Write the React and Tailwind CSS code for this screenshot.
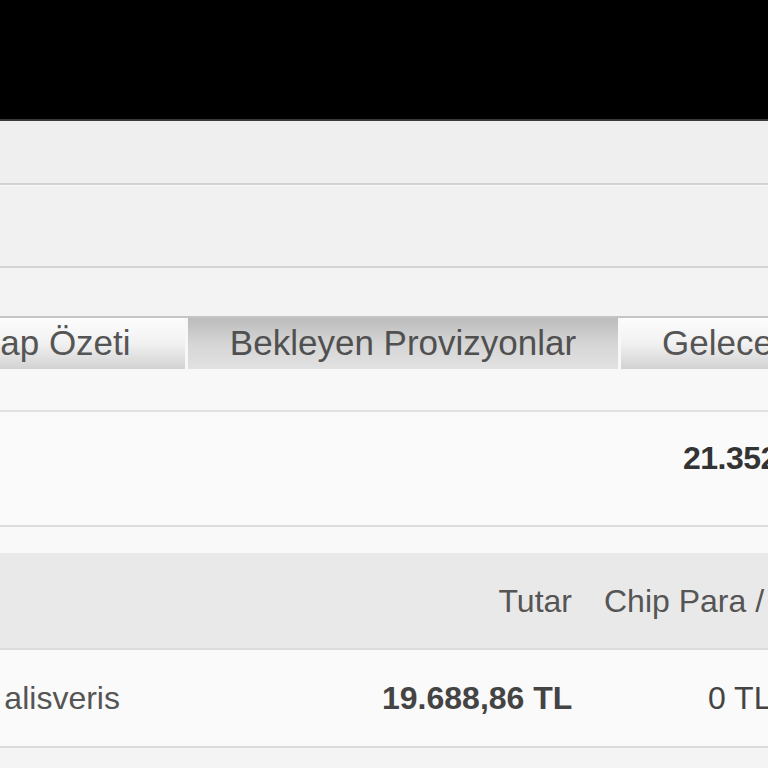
import React from "react";

export default function App() {
  const font = { fontFamily: '"Liberation Sans", Arial, sans-serif' };
  return (
    <div
      className="w-[768px] h-[768px] overflow-hidden bg-[#f4f4f4] flex flex-col"
      style={font}
    >
      {/* top black bar */}
      <div className="h-[121px] shrink-0 bg-black border-b-2 border-[#3a3a3a]" />

      {/* grey header bands */}
      <div className="h-[64px] shrink-0 bg-[#efefef] border-b-2 border-[#d2d2d2]" />
      <div className="h-[83px] shrink-0 bg-[#f1f1f1] border-t border-[#fafafa] border-b-2 border-b-[#d4d4d4]" />
      <div className="h-[48px] shrink-0 bg-[#f3f3f3]" />

      {/* tabs */}
      <div className="h-[54px] shrink-0 border-t-2 border-[#c4c4c4] bg-[#f8f8f8] flex items-stretch gap-[3px] pb-[1px] whitespace-nowrap">
        <div className="ml-[-105px] w-[290px] shrink-0 pl-[43px] flex items-center bg-linear-to-b from-[#fdfdfd] via-[#f1f1f1] to-[#d2d2d2] text-[35px] text-[#555]">
          Hesap Özeti
        </div>
        <div className="w-[430px] shrink-0 flex items-center justify-center bg-linear-to-b from-[#bcbcbc] via-[#d5d5d5] to-[#e2e2e2] text-[35px] text-[#505050]">
          Bekleyen Provizyonlar
        </div>
        <div className="pl-[41px] pr-[40px] flex items-center bg-linear-to-b from-[#fdfdfd] via-[#f1f1f1] to-[#d2d2d2] text-[35px] text-[#555]">
          Gelecek Dönem Taksitleri
        </div>
      </div>

      <div className="h-[42px] shrink-0 bg-[#f8f8f8] border-b-2 border-[#e0e0e0]" />

      {/* total row */}
      <div className="h-[115px] shrink-0 bg-[#fafafa] border-b-2 border-[#dcdcdc] flex items-center pb-[22px] whitespace-nowrap">
        <span className="ml-[683px] text-[32px] font-bold text-[#333] tracking-[-0.5px]">
          21.352,40 TL
        </span>
      </div>

      <div className="h-[26px] shrink-0 bg-[#f9f9f9]" />

      {/* table header */}
      <div className="h-[97px] shrink-0 bg-[#e9e9e9] border-b-2 border-[#dcdcdc] flex items-center whitespace-nowrap text-[32px] text-[#555]">
        <div className="w-[572px] shrink-0 text-right">Tutar</div>
        <div className="ml-[32px]">Chip Para / Puan</div>
      </div>

      {/* data row */}
      <div className="h-[98px] shrink-0 bg-[#fafafa] border-b-2 border-[#dcdcdc] flex items-center whitespace-nowrap text-[32px]">
        <div className="w-[382px] shrink-0 overflow-visible">
          <span className="ml-[-81px] text-[#555]">Mobil alisveris</span>
        </div>
        <div className="w-[190px] shrink-0 text-right font-bold text-[#444]">19.688,86 TL</div>
        <div className="ml-[136px] text-[#444]">0 TL</div>
      </div>

      <div className="flex-1 bg-[#f4f4f4]" />
    </div>
  );
}
